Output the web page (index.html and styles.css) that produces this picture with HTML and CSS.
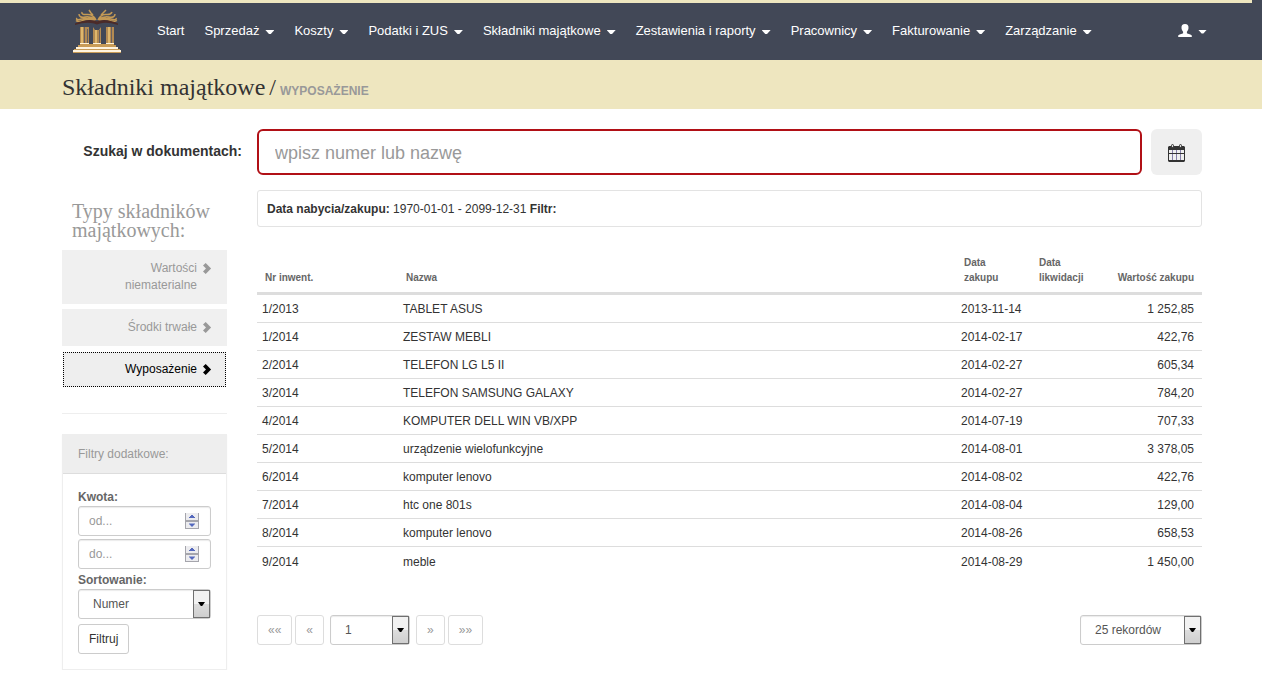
FILE: index.html
```html
<!DOCTYPE html>
<html lang="pl">
<head>
<meta charset="utf-8">
<title>Składniki majątkowe / Wyposażenie</title>
<link rel="stylesheet" href="styles.css">
</head>
<body>
<svg class="sprite" aria-hidden="true">
  <symbol id="chevron" viewBox="0 0 10 12"><path d="M3 0 9 6 3 12 0 9.300 3.300 6 0 2.700z"/></symbol>
  <symbol id="spinner" viewBox="0 0 14 16">
    <path fill="#a5a5ac" d="M0 0h1v16H0zM13 0h1v16h-1zM0 7h14v2H0zM0 15h14v1H0z"/>
    <path fill="#ececef" d="M1 0h12v7H1zM1 9h12v6H1z"/>
    <path fill="#5468bd" d="M6 2h2v1h1v1h1v1H4V4h1V3h1zM4 10.500h6v1H9v1H8v1H6v-1H5v-1H4z"/>
  </symbol>
</svg>

<nav class="navbar">
  <div class="wrap navbar-row">
    <a class="logo" href="#" aria-label="Strona główna">
      <svg viewBox="0 0 48 44" width="48" height="44">
        <g fill="none" stroke="#c49a55" stroke-width="1.500">
          <path d="M23 11Q20 5 14 5.500T9 3M23 11Q18 7 12 8T6 5M22 11Q16 8 9 10T4 9M22 11.500Q15 9.500 10 11.500T3 11.500M20 6 18 4 16 1"/>
          <path d="M25 11Q28 5 33 5.500T39 3M25 11Q30 7 36 8T42 5M26 11Q32 8 38 10T43 9M26 11.500Q33 9.500 37 11.500T44 11.500M28 6 30 4 33 1"/>
        </g>
        <path fill="#4b2b29" d="M2 14.500Q13 9.500 22 11.500l2 1 2-1q9-2 19 3v1.500q-11-3.500-18-1.500l-3 1-3-1Q13 12.500 2 16z"/>
        <path fill="#b38a52" d="M7 18h9v17H7zM20 18l2 3h4l2-3v17h-8zM33 18h8v17h-8z"/>
        <path fill="#dfb76c" d="M8 18h2v17H8zM22 21h2v14h-2zM35 18h2v17h-2z"/>
        <path fill="#686060" d="M11 18h1v16h-1zM14 20h1v14h-1zM26 21h1v13h-1zM38 18h1v16h-1z"/>
        <path fill="#fff3d8" d="M7 34h9v1H7zM20 34h8v1h-8zM33 34h8v1h-8z"/>
        <path fill="#c99c57" d="M7 35h34v1H7zM5 36h38v2H5zM1 40h46v1H1zM0 43h48v1H0z"/>
        <path fill="#fff4df" d="M3 38h42v2H3zM0 41h48v2H0z"/>
      </svg>
    </a>
    <ul class="menu">
      <li><a href="#">Start</a></li>
      <li><a href="#">Sprzedaż <i class="caret"></i></a></li>
      <li><a href="#">Koszty <i class="caret"></i></a></li>
      <li><a href="#">Podatki i ZUS <i class="caret"></i></a></li>
      <li><a href="#">Składniki majątkowe <i class="caret"></i></a></li>
      <li><a href="#">Zestawienia i raporty <i class="caret"></i></a></li>
      <li><a href="#">Pracownicy <i class="caret"></i></a></li>
      <li><a href="#">Fakturowanie <i class="caret"></i></a></li>
      <li><a href="#">Zarządzanie <i class="caret"></i></a></li>
    </ul>
    <a class="user" href="#" aria-label="Konto">
      <svg viewBox="0 0 14 13" width="14" height="13"><path fill="#fff" d="M7 0c2.500 0 3.700 1.600 3.500 4-.1 1.600-.8 2.800-1.600 3.700v1.500c1 .8 4.600 1.200 4.900 2.400V13H.2v-1.400c.3-1.200 3.900-1.600 4.900-2.400V7.700C4.300 6.800 3.600 5.600 3.500 4 3.300 1.600 4.500 0 7 0z"/></svg>
      <i class="caret"></i>
    </a>
  </div>
</nav>

<header class="page-head">
  <div class="wrap"><h1>Składniki majątkowe<span class="slash">/</span><small>WYPOSAŻENIE</small></h1></div>
</header>

<main class="wrap layout">
  <label class="search-label" for="search">Szukaj w dokumentach:</label>
  <div class="search-row">
    <input class="search" id="search" type="text" placeholder="wpisz numer lub nazwę">
    <button class="calendar" type="button" aria-label="Wybierz daty">
      <svg viewBox="0 0 17 18" width="17" height="18">
        <path fill="#333" d="M1 2h15l1 1v14l-1 1H1l-1-1V3z"/>
        <path fill="#efefef" d="M1 6h15v3H1zM1 10h15v6H1z"/>
        <path stroke="#8580a8" d="M4.500 6v10M8.500 6v10M12.500 6v10"/>
        <path stroke="#333" d="M1 9.500h15"/>
        <rect x="3.500" y=".5" width="2" height="3" rx="1" fill="#ddd" stroke="#333"/>
        <rect x="11.500" y=".5" width="2" height="3" rx="1" fill="#ddd" stroke="#333"/>
      </svg>
    </button>
  </div>

  <aside class="side">
    <h2>Typy składników majątkowych:</h2>
    <ul class="types">
      <li><a href="#"><span>Wartości niematerialne</span><svg class="chev"><use href="#chevron"/></svg></a></li>
      <li><a href="#"><span>Środki trwałe</span><svg class="chev"><use href="#chevron"/></svg></a></li>
      <li><a class="active" href="#"><span>Wyposażenie</span><svg class="chev"><use href="#chevron"/></svg></a></li>
    </ul>
    <hr>
    <form class="filters">
      <h3>Filtry dodatkowe:</h3>
      <div class="filters-body">
        <label for="from">Kwota:</label>
        <div class="number"><input class="field" id="from" type="number" placeholder="od..."><svg><use href="#spinner"/></svg></div>
        <div class="number"><input class="field" type="number" placeholder="do..." aria-label="Kwota do"><svg><use href="#spinner"/></svg></div>
        <label for="sort">Sortowanie:</label>
        <div class="select"><select class="field" id="sort"><option>Numer</option></select><i class="drop"></i></div>
        <button class="btn" type="button">Filtruj</button>
      </div>
    </form>
  </aside>

  <section class="content">
    <div class="summary"><b>Data nabycia/zakupu:</b> 1970-01-01 - 2099-12-31 <b>Filtr:</b></div>
    <table>
      <colgroup><col class="c-no"><col><col class="c-buy"><col class="c-end"><col class="c-value"></colgroup>
      <thead>
        <tr><th>Nr inwent.</th><th>Nazwa</th><th>Data<br>zakupu</th><th>Data<br>likwidacji</th><th class="num">Wartość zakupu</th></tr>
      </thead>
      <tbody>
        <tr><td>1/2013</td><td>TABLET ASUS</td><td>2013-11-14</td><td></td><td class="num">1 252,85</td></tr>
        <tr><td>1/2014</td><td>ZESTAW MEBLI</td><td>2014-02-17</td><td></td><td class="num">422,76</td></tr>
        <tr><td>2/2014</td><td>TELEFON LG L5 II</td><td>2014-02-27</td><td></td><td class="num">605,34</td></tr>
        <tr><td>3/2014</td><td>TELEFON SAMSUNG GALAXY</td><td>2014-02-27</td><td></td><td class="num">784,20</td></tr>
        <tr><td>4/2014</td><td>KOMPUTER DELL WIN VB/XPP</td><td>2014-07-19</td><td></td><td class="num">707,33</td></tr>
        <tr><td>5/2014</td><td>urządzenie wielofunkcyjne</td><td>2014-08-01</td><td></td><td class="num">3 378,05</td></tr>
        <tr><td>6/2014</td><td>komputer lenovo</td><td>2014-08-02</td><td></td><td class="num">422,76</td></tr>
        <tr><td>7/2014</td><td>htc one 801s</td><td>2014-08-04</td><td></td><td class="num">129,00</td></tr>
        <tr><td>8/2014</td><td>komputer lenovo</td><td>2014-08-26</td><td></td><td class="num">658,53</td></tr>
        <tr><td>9/2014</td><td>meble</td><td>2014-08-29</td><td></td><td class="num">1 450,00</td></tr>
      </tbody>
    </table>
    <div class="pager">
      <button class="btn page" type="button">««</button>
      <button class="btn page" type="button">«</button>
      <div class="select page-no"><select class="field" aria-label="Strona"><option>1</option></select><i class="drop"></i></div>
      <button class="btn page" type="button">»</button>
      <button class="btn page" type="button">»»</button>
      <div class="select per-page"><select class="field" aria-label="Liczba rekordów"><option>25 rekordów</option></select><i class="drop"></i></div>
    </div>
  </section>
</main>
</body>
</html>
```

FILE: styles.css
```css
* { box-sizing: border-box; }
body { margin: 0; background: #fff; color: #333; font: 12px/17px Arial, "Liberation Sans", sans-serif; }
ul { margin: 0; padding: 0; list-style: none; }
a { color: inherit; text-decoration: none; }
input, select, button { font: inherit; color: inherit; margin: 0; }
.sprite { display: none; }
.wrap { padding: 0 60px 0 62px; }

/* Navigation */
.navbar { background: #424857; color: #fff; font-size: 13px; }
.navbar::before { content: ""; display: block; height: 3px; margin-right: 10px; background: #eee6bf; }
.navbar-row { display: flex; align-items: center; height: 57px; }
.logo { display: flex; margin: 0 26px 2px 11px; }
.menu { display: flex; flex: 1; white-space: nowrap; }
.menu a { display: flex; align-items: center; padding: 0 10px 2px; }
.caret { width: 9px; height: 4px; margin: 3px 0 0 6px; background: #fff; clip-path: polygon(0 0, 100% 0, 60% 100%, 40% 100%); }
.user { display: flex; align-items: center; margin-right: -5px; padding-bottom: 3px; }

.page-head { background: #eee6bf; }
.page-head h1 { margin: 0; padding: 12px 0 7px; font: 24px/30px Georgia, "Liberation Serif", serif; }
.slash { margin: 0 4px; }
.page-head small { color: #999; font: bold 12px/17px Arial, "Liberation Sans", sans-serif; }

/* Page grid */
.layout { display: grid; grid-template-columns: 165px minmax(0, 1fr); column-gap: 30px; padding-top: 20px; }
.search-label { justify-self: end; margin: 14px -15px 0 0; font-size: 14px; font-weight: bold; white-space: nowrap; }
.search-row { display: flex; gap: 9px; }
.search { flex: 1; min-width: 0; height: 46px; padding: 2px 16px 0; border: 2px solid #b11016; border-radius: 6px; font-size: 18px; }
.search::placeholder, .field::placeholder { color: #999; opacity: 1; }
.calendar { display: flex; align-items: center; justify-content: center; width: 51px; height: 46px; padding: 2px 0 0; border: 0; border-radius: 6px; background: #efefef; }

/* Sidebar */
.side { padding-top: 27px; }
.side h2 { margin: 0 0 10px 10px; color: #999; font: 20px/19px Georgia, "Liberation Serif", serif; }
.types { display: grid; gap: 5px; }
.types a { display: flex; justify-content: flex-end; gap: 6px; padding: 10px 15px; background: #f0f0f0; color: #999; text-align: right; }
.types span { max-width: 100px; }
.types a.active { margin: 1px; padding: 8px 13px; border: 1px dotted #000; background: #eee; color: #000; }
.chev { width: 9px; height: 11px; margin-top: 3px; fill: currentColor; }
hr { margin: 25px 0 20px; border: 0; border-top: 1px solid #eee; }
.filters { border: 1px solid #eee; box-shadow: 0 1px 1px rgba(0, 0, 0, .05); }
.filters h3 { margin: 0; padding: 10px 15px; border-bottom: 1px solid #ddd; background: #eee; color: #999; font-size: 12px; font-weight: normal; line-height: 18px; }
.filters-body { padding: 15px; color: #666; }
.filters-body label { display: block; font-weight: bold; }
.number, .select { position: relative; }
.number { margin-bottom: 3px; }
.number svg { position: absolute; right: 12px; top: 7px; width: 14px; height: 16px; pointer-events: none; }
.field { display: block; width: 100%; height: 30px; padding: 0 10px; border: 1px solid #ccc; border-radius: 3px; background: #fff; box-shadow: inset 0 1px 1px rgba(0, 0, 0, .08); appearance: none; color: #555; }
input.field { appearance: textfield; }
select.field { padding: 0 14px; }
.drop { position: absolute; top: 1px; right: 1px; bottom: 1px; width: 17px; border: 1px solid #707070; background: linear-gradient(#f2f2f2 50%, #ddd 50%, #cfcfcf); pointer-events: none; }
.drop::after { content: ""; position: absolute; left: 4px; top: 11px; width: 7px; height: 4px; background: #000; clip-path: polygon(0 0, 100% 0, 60% 100%, 40% 100%); }
.btn { height: 30px; padding: 0 10px; border: 1px solid #ccc; border-radius: 3px; background: #fff; color: #333; }
.filters-body .btn { margin-top: 5px; }

/* Results */
.content { padding-top: 15px; }
.summary { padding: 10px 9px 8px; border: 1px solid #e3e3e3; border-radius: 3px; }
table { width: 100%; margin-top: 24px; border-collapse: separate; border-spacing: 0; table-layout: fixed; }
.c-no { width: 141px; }
.c-buy, .c-end { width: 75px; }
.c-value { width: 96px; }
th { padding: 4px 8px 7px; border-bottom: 3px solid #ddd; color: #666; font-size: 10px; line-height: 15px; text-align: left; vertical-align: bottom; }
td { height: 28px; padding: 2px 5px 0; border-bottom: 1px solid #ddd; white-space: nowrap; }
tr:last-child td { border-bottom: 0; }
.num { text-align: right; white-space: nowrap; }
td.num { padding-right: 8px; }
thead .num { padding-left: 0; }
.pager { display: flex; gap: 3px; margin-top: 40px; }
.page { border-color: #ddd; color: #999; }
.page-no { width: 80px; margin: 0 3px; }
.per-page { width: 122px; margin-left: auto; }
```
